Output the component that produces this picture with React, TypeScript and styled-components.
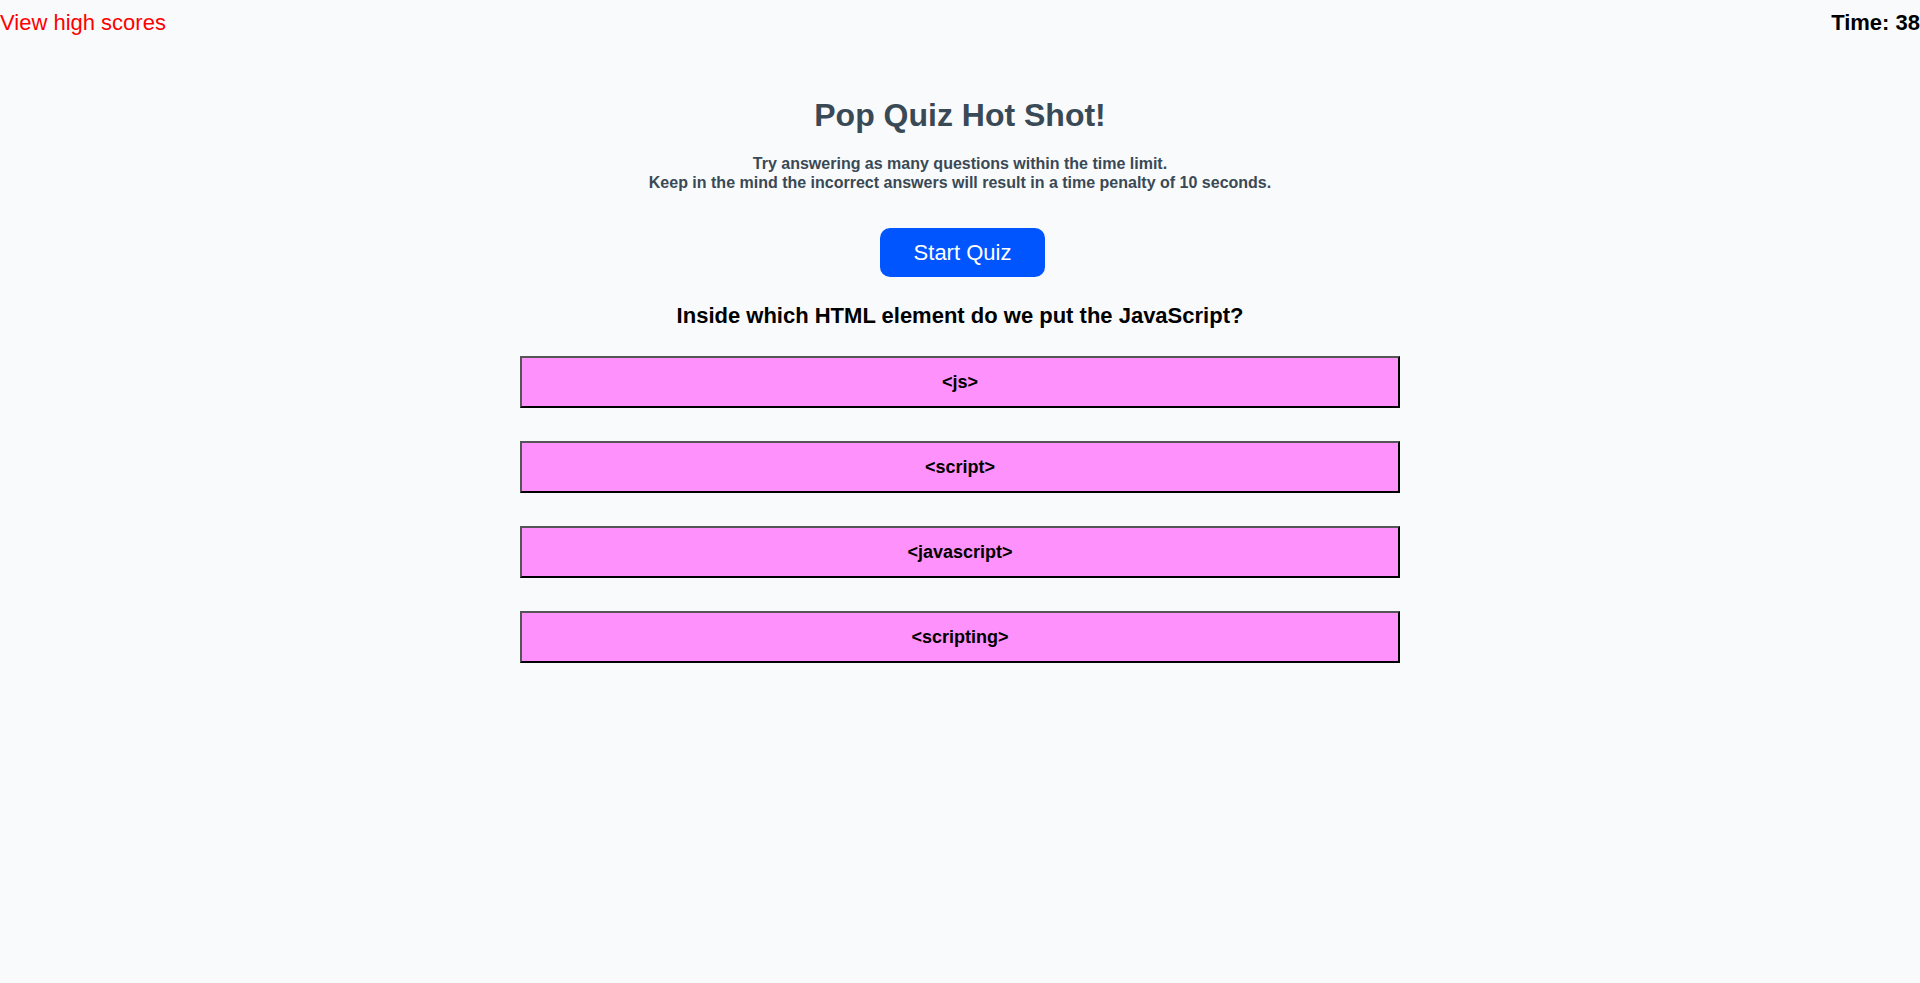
import React from "react";
import styled, { createGlobalStyle } from "styled-components";

const Global = createGlobalStyle`
  html, body {
    margin: 0;
    padding: 0;
    background: #f9fafb;
    font-family: "Liberation Sans", Arial, sans-serif;
  }
`;

const Page = styled.div`
  min-height: 983px;
  background: #f9fafb;
`;

const Header = styled.header`
  display: flex;
  justify-content: space-between;
  align-items: center;
  padding: 10px 0 0 0;
  font-size: 22px;
  line-height: 25px;
`;

const ScoresLink = styled.a`
  color: #ff0000;
  text-decoration: none;
  cursor: pointer;
`;

const Timer = styled.div`
  font-weight: bold;
  color: #000;
`;

const Main = styled.main`
  display: flex;
  flex-direction: column;
  align-items: center;
  padding-top: 62px;
`;

const Title = styled.h1`
  margin: 0;
  font-size: 32px;
  line-height: 37px;
  font-weight: bold;
  color: #394955;
`;

const Intro = styled.p`
  margin: 21px 0 0 0;
  font-size: 16px;
  line-height: 18.5px;
  font-weight: bold;
  color: #394955;
  text-align: center;
`;

const StartButton = styled.button`
  margin: 36px 0 0 5px;
  height: 49px;
  padding: 0 34px;
  border: none;
  border-radius: 10px;
  background: #0055ff;
  color: #fff;
  font-family: inherit;
  font-size: 22px;
  cursor: pointer;
`;

const Question = styled.h2`
  margin: 26px 0 0 0;
  font-size: 22px;
  line-height: 25px;
  font-weight: bold;
  color: #000;
`;

const Answers = styled.div`
  margin-top: 28px;
  display: flex;
  flex-direction: column;
  gap: 33px;
  width: 880px;
`;

const Answer = styled.button`
  box-sizing: border-box;
  width: 100%;
  height: 52px;
  border: 2px solid;
  border-color: #555 #000 #000 #555;
  background: #ff91fd;
  color: #000;
  font-family: inherit;
  font-size: 18px;
  font-weight: bold;
  cursor: pointer;
`;

const answers = ["<js>", "<script>", "<javascript>", "<scripting>"];

export default function App() {
  return (
    <Page>
      <Global />
      <Header>
        <ScoresLink>View high scores</ScoresLink>
        <Timer>Time: 38</Timer>
      </Header>
      <Main>
        <Title>Pop Quiz Hot Shot!</Title>
        <Intro>
          Try answering as many questions within the time limit.
          <br />
          Keep in the mind the incorrect answers will result in a time penalty of 10 seconds.
        </Intro>
        <StartButton>Start Quiz</StartButton>
        <Question>Inside which HTML element do we put the JavaScript?</Question>
        <Answers>
          {answers.map((a) => (
            <Answer key={a}>{a}</Answer>
          ))}
        </Answers>
      </Main>
    </Page>
  );
}
